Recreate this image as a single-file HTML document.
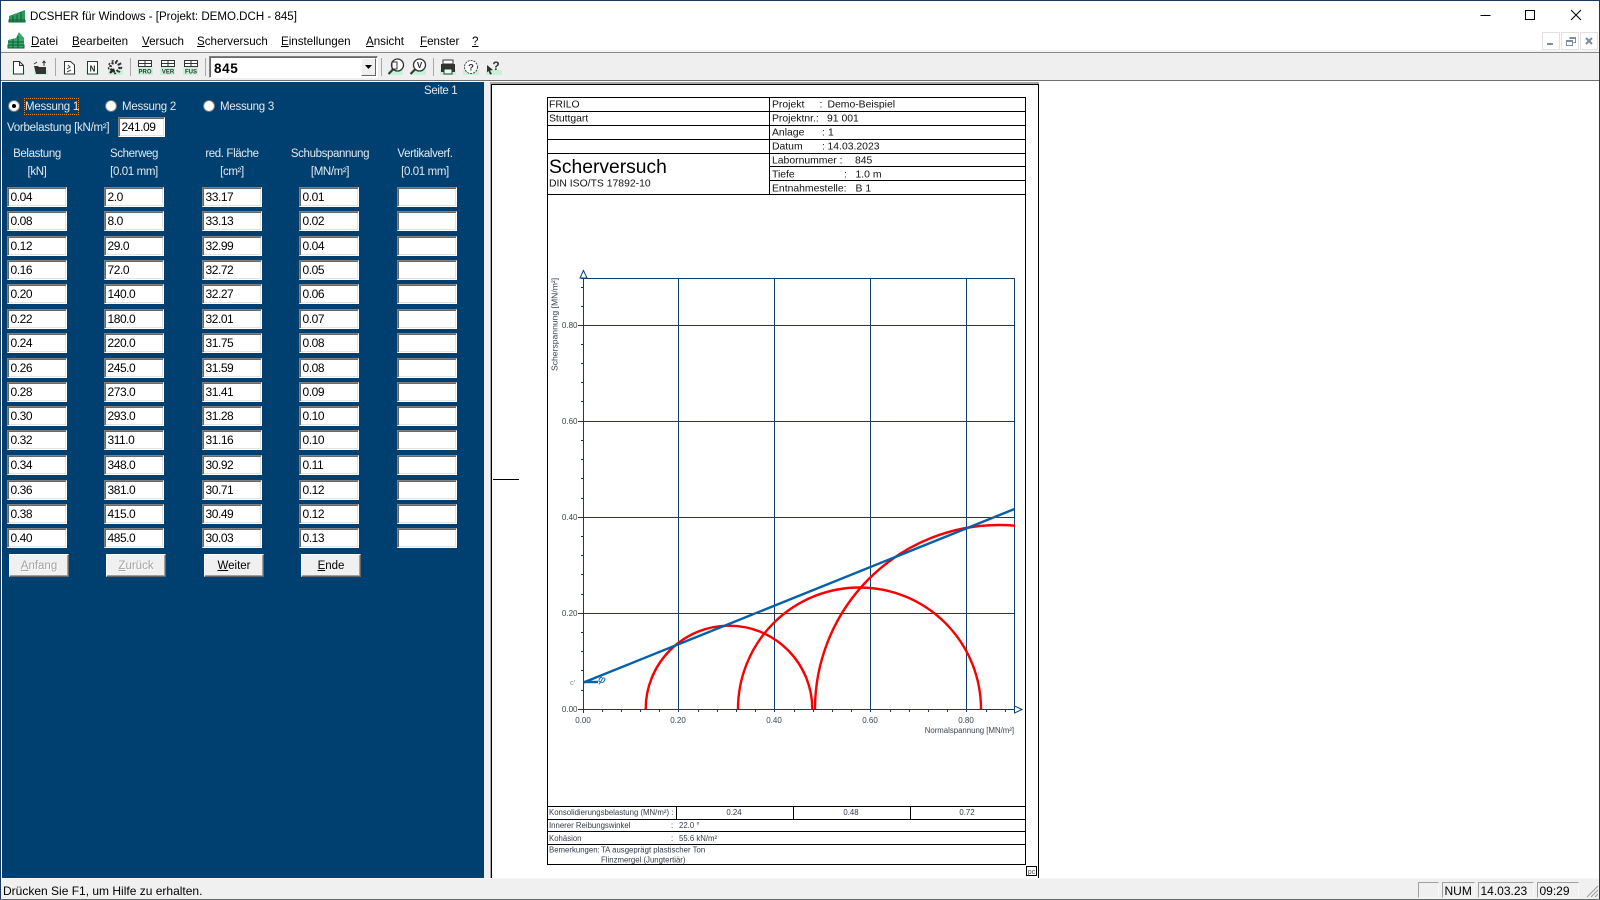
<!DOCTYPE html>
<html lang="de"><head><meta charset="utf-8"><title>DCSHER für Windows</title>
<style>
html,body{margin:0;padding:0;width:1600px;height:900px;overflow:hidden;background:#fff}
body{position:relative;font-family:"Liberation Sans",Arial,sans-serif;color:#000}
.a{position:absolute;white-space:nowrap}
.m{position:absolute;top:35px;font-size:11.6px;line-height:14px;white-space:nowrap}
u{text-decoration:underline}
.h{position:absolute;width:120px;text-align:center;font-size:11.5px;letter-spacing:-.38px;line-height:14px;color:#e4e9ee}
.r{position:absolute;left:0;width:480px;height:20px}
.r b{position:absolute;top:0;width:60px;height:20px;box-sizing:border-box;background:#fff;border:1px solid;border-color:#808080 #fff #fff #808080;box-shadow:inset 1px 1px #696969,inset -1px -1px #e3e3e3;font:normal 12px/18px "Liberation Sans",sans-serif;letter-spacing:-.45px;padding-left:2.5px;color:#000}
.r b:nth-child(1){left:7px}.r b:nth-child(2){left:104px}.r b:nth-child(3){left:202px}.r b:nth-child(4){left:299px}.r b:nth-child(5){left:397px}
.btn{position:absolute;top:554px;width:60px;height:23px;box-sizing:border-box;background:#f0f0f0;border:1px solid;border-color:#fff #666 #666 #fff;box-shadow:inset -1px -1px #a0a0a0;text-align:center;font-size:11.5px;line-height:22px}
.dis{color:#a3a3a3;text-shadow:1px 1px 0 #fff}
.rad{position:absolute;width:12px;height:12px;box-sizing:border-box;border-radius:50%;background:#fff;border:1px solid #777;top:100px}
.rl{position:absolute;top:100px;font-size:11.5px;letter-spacing:-.25px;line-height:14px;color:#e4e9ee;white-space:nowrap}
.st{position:absolute;top:882px;height:16px;box-sizing:border-box;border:1px solid;border-color:#a0a0a0 #f8f8f8 #f8f8f8 #a0a0a0;font-size:12px;line-height:16px;color:#000;padding-left:1.5px;white-space:nowrap;overflow:hidden}
svg{position:absolute;left:0;top:0}
</style></head><body>

<!-- window frame / bars -->
<div class="a" style="left:0;top:0;width:1600px;height:1px;background:#1b3a5f"></div>
<div class="a" style="left:0;top:0;width:1px;height:900px;background:#1b3a5f"></div>
<div class="a" style="left:1599px;top:0;width:1px;height:900px;background:#1b3a5f"></div>
<div class="a" style="left:1px;top:50px;width:1598px;height:2px;background:#f4f4f4"></div>
<div class="a" style="left:1px;top:52px;width:1598px;height:29px;background:#efefef;border-top:1px solid #8a8a8a;border-bottom:1px solid #707070;box-sizing:border-box"></div>

<div class="a" style="left:30px;top:10px;font-size:11.55px;line-height:14px">DCSHER für Windows - [Projekt: DEMO.DCH - 845]</div>
<div class="m" style="left:31px"><u>D</u>atei</div>
<div class="m" style="left:72px"><u>B</u>earbeiten</div>
<div class="m" style="left:142px"><u>V</u>ersuch</div>
<div class="m" style="left:197px"><u>S</u>cherversuch</div>
<div class="m" style="left:281px"><u>E</u>instellungen</div>
<div class="m" style="left:366px"><u>A</u>nsicht</div>
<div class="m" style="left:420px"><u>F</u>enster</div>
<div class="m" style="left:472px"><u>?</u></div>

<!-- combo -->
<div class="a" style="left:209px;top:56px;width:169px;height:22px;box-sizing:border-box;background:#fff;border:1px solid;border-color:#808080 #fff #fff #808080;box-shadow:inset 1px 1px #696969;font:bold 13.5px/23px 'Liberation Sans',sans-serif;padding-left:4px;letter-spacing:.6px">845</div>
<div class="a" style="left:361px;top:58px;width:15px;height:18px;box-sizing:border-box;background:#f0f0f0;border:1px solid;border-color:#fff #666 #666 #fff"></div>

<!-- blue panel -->
<div class="a" style="left:2px;top:82px;width:482px;height:796px;background:#004070"></div>
<div class="a" style="left:424px;top:84px;font-size:11.5px;letter-spacing:-.35px;line-height:14px;color:#e4e9ee">Seite 1</div>
<div class="rad" style="left:8px"><div class="a" style="left:3px;top:3px;width:4px;height:4px;border-radius:50%;background:#000"></div></div>
<div class="a" style="left:24px;top:98px;width:53px;height:15px;border:1px dotted #d98a3a"></div>
<div class="rl" style="left:25px">Messung 1</div>
<div class="rad" style="left:105px"></div><div class="rl" style="left:122px">Messung 2</div>
<div class="rad" style="left:203px"></div><div class="rl" style="left:220px">Messung 3</div>
<div class="rl" style="left:7px;top:121px">Vorbelastung [kN/m²]</div>
<div class="r" style="top:117px"><b style="left:118px;width:47px">241.09</b></div>

<div class="h" style="left:-23px;top:147px">Belastung</div><div class="h" style="left:-23px;top:165px">[kN]</div>
<div class="h" style="left:74px;top:147px">Scherweg</div><div class="h" style="left:74px;top:165px">[0.01 mm]</div>
<div class="h" style="left:172px;top:147px">red. Fläche</div><div class="h" style="left:172px;top:165px">[cm²]</div>
<div class="h" style="left:270px;top:147px">Schubspannung</div><div class="h" style="left:270px;top:165px">[MN/m²]</div>
<div class="h" style="left:365px;top:147px">Vertikalverf.</div><div class="h" style="left:365px;top:165px">[0.01 mm]</div>

<div class="r" style="top:187px"><b>0.04</b><b>2.0</b><b>33.17</b><b>0.01</b><b></b></div>
<div class="r" style="top:211px"><b>0.08</b><b>8.0</b><b>33.13</b><b>0.02</b><b></b></div>
<div class="r" style="top:236px"><b>0.12</b><b>29.0</b><b>32.99</b><b>0.04</b><b></b></div>
<div class="r" style="top:260px"><b>0.16</b><b>72.0</b><b>32.72</b><b>0.05</b><b></b></div>
<div class="r" style="top:284px"><b>0.20</b><b>140.0</b><b>32.27</b><b>0.06</b><b></b></div>
<div class="r" style="top:309px"><b>0.22</b><b>180.0</b><b>32.01</b><b>0.07</b><b></b></div>
<div class="r" style="top:333px"><b>0.24</b><b>220.0</b><b>31.75</b><b>0.08</b><b></b></div>
<div class="r" style="top:358px"><b>0.26</b><b>245.0</b><b>31.59</b><b>0.08</b><b></b></div>
<div class="r" style="top:382px"><b>0.28</b><b>273.0</b><b>31.41</b><b>0.09</b><b></b></div>
<div class="r" style="top:406px"><b>0.30</b><b>293.0</b><b>31.28</b><b>0.10</b><b></b></div>
<div class="r" style="top:430px"><b>0.32</b><b>311.0</b><b>31.16</b><b>0.10</b><b></b></div>
<div class="r" style="top:455px"><b>0.34</b><b>348.0</b><b>30.92</b><b>0.11</b><b></b></div>
<div class="r" style="top:480px"><b>0.36</b><b>381.0</b><b>30.71</b><b>0.12</b><b></b></div>
<div class="r" style="top:504px"><b>0.38</b><b>415.0</b><b>30.49</b><b>0.12</b><b></b></div>
<div class="r" style="top:528px"><b>0.40</b><b>485.0</b><b>30.03</b><b>0.13</b><b></b></div>

<div class="btn dis" style="left:9px"><u>A</u>nfang</div>
<div class="btn dis" style="left:106px"><u>Z</u>urück</div>
<div class="btn" style="left:204px"><u>W</u>eiter</div>
<div class="btn" style="left:301px"><u>E</u>nde</div>

<!-- gutter -->
<div class="a" style="left:484px;top:82px;width:6px;height:796px;background:#f0f0f0"></div>
<div class="a" style="left:490px;top:82px;width:549px;height:2px;background:#a8a8a8"></div>
<div class="a" style="left:490px;top:82px;width:1px;height:796px;background:#a8a8a8"></div>

<!-- status bar -->
<div class="a" style="left:1px;top:878px;width:1598px;height:21px;background:#f0f0f0;border-top:1px solid #f8f8f8;box-sizing:border-box"></div>
<div class="a" style="left:0;top:899px;width:1600px;height:1px;background:#5e6a78"></div>
<div class="a" style="left:3px;top:884px;font-size:12px;line-height:15px">Drücken Sie F1, um Hilfe zu erhalten.</div>
<div class="st" style="left:1418px;width:21px"></div>
<div class="st" style="left:1442px;width:33px">NUM</div>
<div class="st" style="left:1478px;width:56px">14.03.23</div>
<div class="st" style="left:1537px;width:42px">09:29</div>

<svg width="1600" height="900" viewBox="0 0 1600 900" font-family="Liberation Sans, sans-serif">
<defs><clipPath id="c"><rect x="583" y="270" width="432" height="440"/></clipPath></defs>

<!-- app icons -->
<g shape-rendering="crispEdges">
<path d="M9 22V16L25 10V22Z" fill="#2f9a5c"/><path d="M9 22h16v-2H9zM13 22v-6M17 22v-7M21 22V12" stroke="#0f5c36" fill="none"/>
<path d="M8 48V40L16 38 19 32 24 38V48Z" fill="#3aa868"/><path d="M8 48h16v-3H8zM8 42h16M13 48v-9M18 48V36" stroke="#0f5c36" fill="none"/>
</g>

<!-- window controls -->
<path d="M1480.5 15.5h10" stroke="#000"/>
<rect x="1525.5" y="10.5" width="9" height="9" fill="none" stroke="#000"/>
<path d="M1571 10L1581 20M1581 10L1571 20" stroke="#000" fill="none"/>
<g fill="#fff" stroke="#e2e2e2"><rect x="1542.5" y="32.5" width="17" height="17"/><rect x="1561.5" y="32.5" width="17" height="17"/><rect x="1580.5" y="32.5" width="17" height="17"/></g>
<rect x="1547" y="43" width="6" height="2" fill="#7e8c9c"/>
<path d="M1569.5 37.5h6v5h-2M1566.5 40.5h6v5h-6zM1566.5 41.5h6M1569.5 38.5h6" stroke="#7e8c9c" fill="none" shape-rendering="crispEdges"/>
<path d="M1586 38l6 6M1592 38l-6 6" stroke="#7e8c9c" stroke-width="2" fill="none"/>

<!-- toolbar -->
<g stroke="#a8a8a8" shape-rendering="crispEdges"><path d="M55.5 58v18M130.5 58v18M205.5 58v18M381.5 58v18M433.5 58v18"/></g>
<g fill="#c9f0d8">
<rect x="12" y="70" width="13" height="5"/><rect x="34" y="70" width="14" height="5"/><rect x="63" y="70" width="13" height="5"/><rect x="86" y="70" width="13" height="5"/><rect x="108" y="70" width="15" height="5"/><rect x="138" y="67" width="15" height="8"/><rect x="160" y="67" width="15" height="8"/><rect x="183" y="67" width="15" height="8"/><rect x="388" y="70" width="15" height="5"/><rect x="411" y="70" width="15" height="5"/><rect x="440" y="70" width="16" height="5"/><rect x="463" y="70" width="16" height="5"/><rect x="486" y="70" width="16" height="5"/>
</g>
<!-- new -->
<path d="M13.5 61.5h6l4 4v8.5h-10zM19.5 61.5v4h4" fill="#fff" stroke="#333"/>
<!-- open -->
<path d="M34 66h4l1 1h7v7H36z" fill="#333"/><path d="M44 66v-5M42.500 63l1.500-2 1.500 2" stroke="#333" fill="none"/><path d="M34 64l3-2" stroke="#333"/>
<!-- doc s -->
<path d="M64.500 61.500h6l4 3.500v9h-10z" fill="#fff" stroke="#333"/><path d="M67 69l3-2-2-2M67 72l4-2" stroke="#444" fill="none"/>
<!-- doc N -->
<rect x="87.500" y="61.500" width="10" height="12.500" fill="#f4fff8" stroke="#333"/><text x="92.500" y="71.500" font-size="8" font-weight="bold" text-anchor="middle" fill="#222">N</text>
<!-- gear -->
<circle cx="115" cy="67" r="4.500" fill="none" stroke="#333" stroke-width="2.500" stroke-dasharray="2 1.500"/><circle cx="115" cy="67" r="6.500" fill="none" stroke="#333" stroke-width="1.500" stroke-dasharray="2 2.500"/><path d="M110 73l4-4" stroke="#222" stroke-width="2"/>
<!-- table icons -->
<g fill="#fff" stroke="#333" shape-rendering="crispEdges">
<path d="M138.500 60.500h13v6h-13zM138.500 63.500h13M145 60.500v6"/>
<path d="M161.500 60.500h13v6h-13zM161.500 63.500h13M168 60.500v6"/>
<path d="M184.500 60.500h13v6h-13zM184.500 63.500h13M191 60.500v6"/>
</g>
<g font-size="6" font-weight="bold" fill="#333" text-anchor="middle"><text x="145" y="73.500">PRO</text><text x="168" y="73.500">VER</text><text x="191" y="73.500">FUS</text></g>
<!-- combo arrow -->
<path d="M365 65h7l-3.500 4z" fill="#000"/>
<!-- zoom icons -->
<circle cx="397.500" cy="65" r="6" fill="#fff" stroke="#333" stroke-width="1.300"/><path d="M393 69.500l-4.500 4.500" stroke="#333" stroke-width="2"/><path d="M392 62h5v7h-5z" fill="none" stroke="#333"/>
<circle cx="419.500" cy="65" r="6" fill="#fff" stroke="#333" stroke-width="1.300"/><path d="M415 69.500l-4.500 4.500" stroke="#333" stroke-width="2"/><text x="419.500" y="68" font-size="8" font-weight="bold" text-anchor="middle" fill="#222">V</text>
<!-- printer -->
<path d="M443 60h10v4h-10z" fill="#fff" stroke="#333"/><path d="M441 64h14v8h-14z" fill="#333"/><path d="M444 69h8v5h-8z" fill="#dfe" stroke="#333"/>
<!-- help -->
<circle cx="471" cy="67" r="6.500" fill="#fff" stroke="#444" stroke-dasharray="2 1"/><text x="471" y="70.500" font-size="9.500" font-weight="bold" text-anchor="middle" fill="#333">?</text>
<path d="M487 65l6 5-3 .5 2 3.500-2 .5-1.500-3.500-1.500 1.500z" fill="#333"/><text x="496" y="70" font-size="12" font-weight="bold" text-anchor="middle" fill="#333">?</text>

<!-- page -->
<g shape-rendering="crispEdges" fill="none" stroke="#000">
<path d="M491.500 878V84.500H1038.500V878"/>
<path d="M493 479.500h26"/>
<rect x="547.500" y="97.500" width="478" height="767"/>
<path d="M769.500 97.500V194.500M547.500 111.500H1025M547.500 125.500H1025M547.500 139.500H1025M547.500 153.500H1025M769.500 166.500H1025M769.500 180.500H1025M547.500 194.500H1025"/>
<path d="M547.500 806.500H1025M547.500 819.500H1025M547.500 831.500H1025M547.500 844.500H1025M676.500 806.500V819.500M793.500 806.500V819.500M910.500 806.500V819.500"/>
<rect x="1026.500" y="866.500" width="10" height="9"/>
</g>
<text x="1031.500" y="874" font-size="7" text-anchor="middle" fill="#555">pc</text>

<g font-size="10.400" fill="#111">
<text x="549" y="107.500">FRILO</text><text x="549" y="121.500">Stuttgart</text>
<text x="772" y="107.500">Projekt</text><text x="819.500" y="107.500">:</text><text x="827.500" y="107.500">Demo-Beispiel</text>
<text x="772" y="121.500">Projektnr.:</text><text x="827" y="121.500">91 001</text>
<text x="772" y="135.500">Anlage</text><text x="822" y="135.500">:</text><text x="828" y="135.500">1</text>
<text x="772" y="149.500">Datum</text><text x="822" y="149.500">:</text><text x="827.500" y="149.500">14.03.2023</text>
<text x="772" y="163.500">Labornummer :</text><text x="855" y="163.500">845</text>
<text x="772" y="177.500">Tiefe</text><text x="844" y="177.500">:</text><text x="855.500" y="177.500">1.0 m</text>
<text x="772" y="191.500">Entnahmestelle:</text><text x="855.500" y="191.500">B 1</text>
<text x="549" y="186.500">DIN ISO/TS 17892-10</text>
</g>
<text x="549" y="173" font-size="19.300" fill="#000">Scherversuch</text>

<g font-size="7.800" fill="#333a48">
<text x="549" y="815">Konsolidierungsbelastung (MN/m²) :</text>
<text x="734" y="815" text-anchor="middle">0.24</text><text x="851" y="815" text-anchor="middle">0.48</text><text x="967" y="815" text-anchor="middle">0.72</text>
<text x="549" y="828">Innerer Reibungswinkel</text><text x="671" y="828">:</text><text x="679" y="828">22.0 °</text>
<text x="549" y="841">Kohäsion</text><text x="671" y="841">:</text><text x="679" y="841">55.6 kN/m²</text>
<text x="549" y="852.500">Bemerkungen:</text><text x="601" y="852.500">TA ausgeprägt plastischer Ton</text>
<text x="601" y="862.500">Flinzmergel (Jungtertiär)</text>
</g>

<!-- chart grid -->
<g fill="none" stroke="#0b3f6f" shape-rendering="crispEdges">
<path d="M583.500 270V713M678.500 278V712M774.500 278V712M870.500 278V712M966.500 278V712M1014.500 278V710"/>
<path d="M578 325.500H1014.500M578 421.500H1014.500M578 517.500H1014.500M578 613.500H1014.500M578 709.500H1014.500M581 278.500H1014.500"/>
<path d="M581 287.500h3M581 306.500h3M581 344.500h3M581 363.500h3M581 382.500h3M581 401.500h3M581 440.500h3M581 459.500h3M581 478.500h3M581 498.500h3M581 536.500h3M581 555.500h3M581 574.500h3M581 594.500h3M581 632.500h3M581 651.500h3M581 670.500h3M581 690.500h3"/>
<path d="M602.500 709v3M621.500 709v3M640.500 709v3M659.500 709v3M698.500 709v3M717.500 709v3M736.500 709v3M755.500 709v3M794.500 709v3M813.500 709v3M832.500 709v3M851.500 709v3M890.500 709v3M909.500 709v3M928.500 709v3M947.500 709v3M986.500 709v3M1005.500 709v3"/>
</g>
<path d="M583.500 270.500L580 278h7z" fill="#fff" stroke="#0b3f6f"/>
<path d="M1022 709.500L1014.500 706v7z" fill="#fff" stroke="#0b3f6f"/>

<!-- circles -->
<g clip-path="url(#c)" fill="none" stroke="#f80000" stroke-width="2.400">
<path d="M645.700 709A83.300 83.300 0 0 1 812.300 709"/>
<path d="M738 709A121.500 121.500 0 0 1 981 709"/>
<path d="M815 709A184 184 0 0 1 1183 709"/>
</g>
<!-- strength line -->
<path d="M583.500 682.500L1014.500 509" stroke="#0060a8" stroke-width="2.400" fill="none"/>
<path d="M583.500 682H598" stroke="#0060a8" stroke-width="2.400" fill="none"/>
<text x="599" y="683" font-size="11" fill="#0060a8" font-style="italic" transform="rotate(20 603 678)">φ</text>
<text x="570" y="685" font-size="7.500" fill="#7a8ba0">c'</text>

<g font-size="8" fill="#3a4450">
<text x="577.500" y="328" text-anchor="end">0.80</text><text x="577.500" y="424" text-anchor="end">0.60</text><text x="577.500" y="520" text-anchor="end">0.40</text><text x="577.500" y="616" text-anchor="end">0.20</text><text x="577.500" y="712" text-anchor="end">0.00</text>
<text x="583" y="723" text-anchor="middle">0.00</text><text x="678" y="723" text-anchor="middle">0.20</text><text x="774" y="723" text-anchor="middle">0.40</text><text x="870" y="723" text-anchor="middle">0.60</text><text x="966" y="723" text-anchor="middle">0.80</text>
<text x="1014" y="733" text-anchor="end" font-size="7.800">Normalspannung [MN/m²]</text>
<text transform="translate(557.500 371) rotate(-90)" font-size="8.600">Scherspannung [MN/m²]</text>
</g>

<!-- grip -->
<path d="M1587 897l11-11M1591 897l7-7M1595 897l3-3" stroke="#9a9a9a" fill="none"/>
</svg>
</body></html>
